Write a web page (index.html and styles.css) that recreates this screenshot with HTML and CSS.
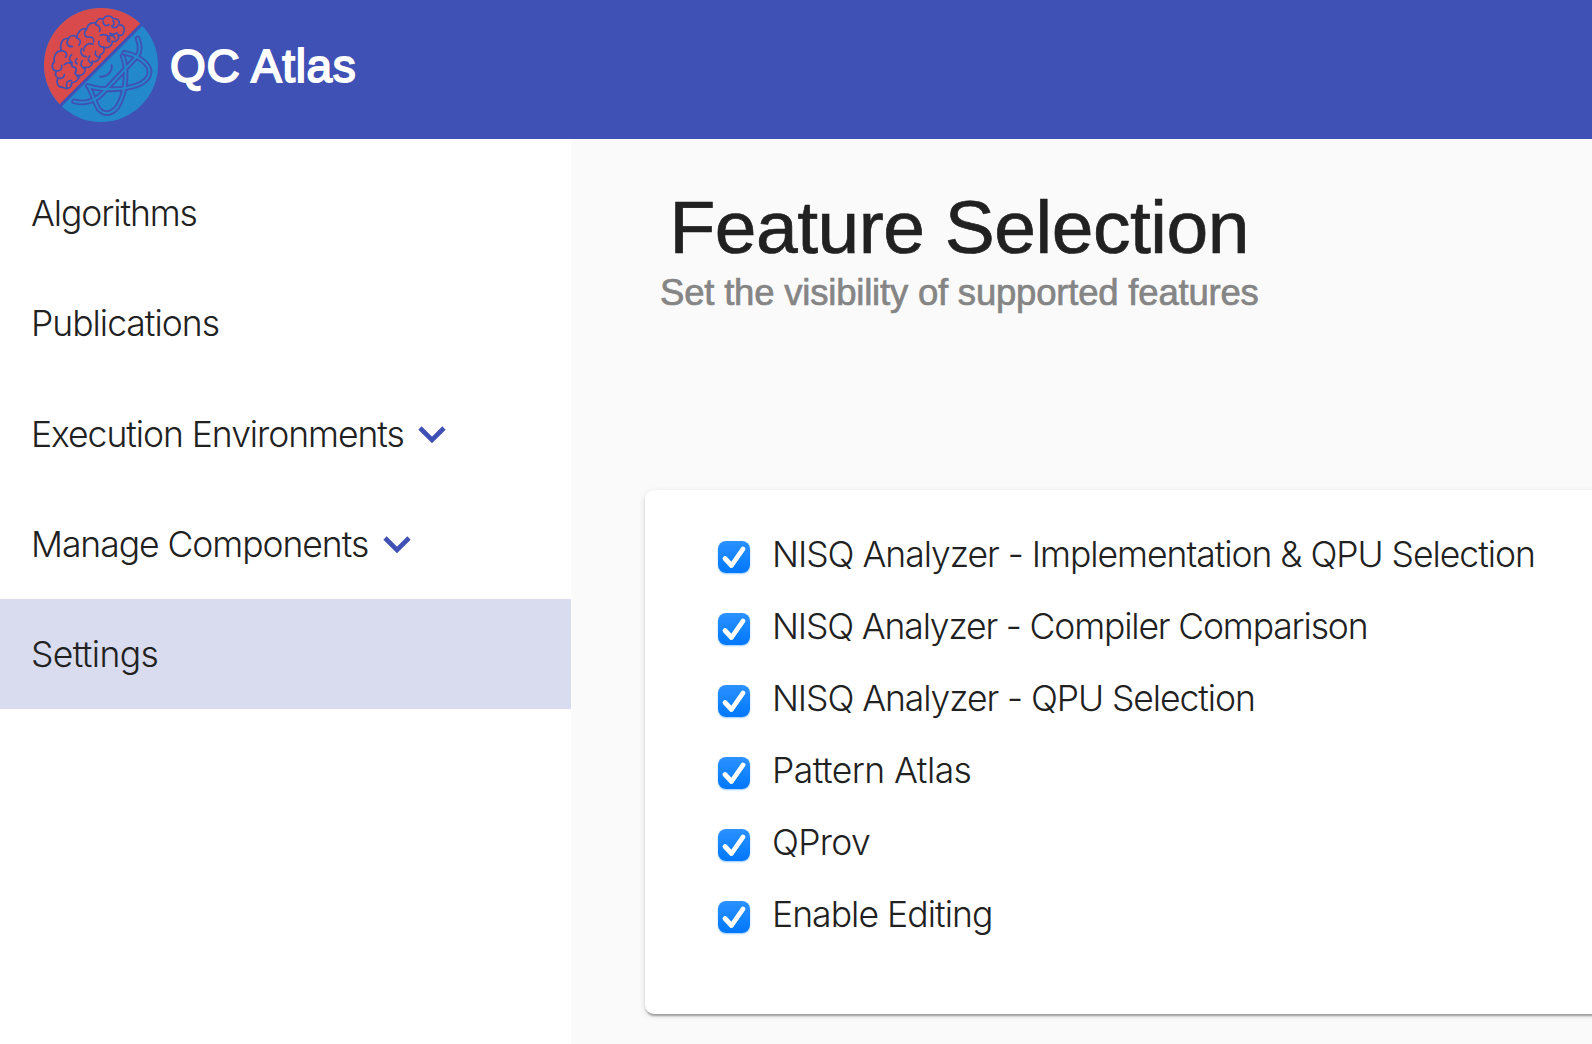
FILE: index.html
```html
<!DOCTYPE html>
<html lang="en">
<head>
<meta charset="utf-8">
<title>QC Atlas</title>
<link rel="stylesheet" href="styles.css">
</head>
<body>
<header class="toolbar">
  <svg class="logo" viewBox="42 24 342 342" aria-hidden="true">
    <circle cx="213" cy="195" r="171" fill="#2488cc"/>
    <path d="M92 316A171 171 0 0 1 334 74Z" fill="#d84a4b"/>
    <path d="M86 322L340 68" stroke="#3f51b5" stroke-width="9"/>
    <g class="lines">
      <path d="M85 234c-10-4-10-14-6-20c-14-4-16-20-6-28c-4-16 4-32 20-34c-4-20 4-40 22-36c4-10 18-12 26-4c2-20 18-30 28-24c4-16 16-22 28-18c2-10 12-18 22-12c6-12 24-14 30-2c14-2 22 8 18 18c14 0 20 14 14 22c0 10-8 12-16 8c4 14-6 24-18 20c0 14-12 22-26 18c4 10 0 20-10 22c0 14-12 24-24 20c0 14-10 20-22 18c2 16-6 26-20 24c2 14-8 22-20 22c0 16-14 22-26 14c-14 0-22-12-16-26Z"/>
      <path d="M95 152c14 2 18 10 12 20M79 214c12 0 18-8 16-18M115 118c-8 12-2 22 12 22M141 114c12 4 12 14 6 22M169 88c-10 10-6 20 4 24c14-4 20 4 18 14M197 74c10 2 16 10 12 20M219 64c0 12 10 16 18 10M263 78c-6 8-14 6-18 0M249 62c6 6 4 14-4 16M221 142c-12 0-18-10-14-18M211 172c-12 0-18-8-14-18M187 190c-12-2-16-14-8-22M165 206c-14-4-14-16-8-24M149 232c-10-2-16-12-12-20M110 262c-4-12 4-22 14-20M85 234c10 4 18-2 18-10M103 194c10-10 24-6 24 6c12 0 16 12 8 20M125 164c-10 8-8 20 2 24M155 146c-6 12 0 24 14 24M189 132c-14-4-28 4-28 20M239 126c-8-2-10-12-2-18c8-4 16 0 18 8M261 98c-8 8-14 6-22 2M211 106c14-6 28 2 28 14M141 192c-6-4-6-12 0-16"/>
      <path d="M210 230C230 232 248 215 245 196" stroke-width="6"/>
      <path class="orbit-outer" d="M132 304C165 314 198 302 221 276L321 169C333 154 331 136 323 115M283 158C344 171 365 205 357 226C345 253 303 266 244 268C222 268 199 266 173 258M278 168C293 205 288 269 270 306C253 344 225 347 207 328C193 308 191 287 176 260"/>
      <path class="orbit-inner" d="M132 304C165 314 198 302 221 276L321 169C333 154 331 136 323 115M283 158C344 171 365 205 357 226C345 253 303 266 244 268C222 268 199 266 173 258M278 168C293 205 288 269 270 306C253 344 225 347 207 328C193 308 191 287 176 260"/>
    </g>
  </svg>
  <span class="brand">QC Atlas</span>
</header>
<div class="layout">
  <nav class="sidebar">
    <a class="nav-item nav-algorithms">Algorithms</a>
    <a class="nav-item nav-publications">Publications</a>
    <a class="nav-item nav-execution">Execution Environments<svg class="chevron" viewBox="0 0 28 17"><path d="M2 2L14 14L26 2"/></svg></a>
    <a class="nav-item nav-components">Manage Components<svg class="chevron" viewBox="0 0 28 17"><path d="M2 2L14 14L26 2"/></svg></a>
    <a class="nav-item nav-settings active">Settings</a>
  </nav>
  <main class="content">
    <h1 class="title">Feature Selection</h1>
    <p class="subtitle">Set the visibility of supported features</p>
    <section class="card">
      <label class="option"><span class="check"><svg viewBox="0 0 32 32"><path d="M7 17.5L13.5 24.5L25 8"/></svg></span><span class="label label-implementation">NISQ Analyzer - Implementation &amp; QPU Selection</span></label>
      <label class="option"><span class="check"><svg viewBox="0 0 32 32"><path d="M7 17.5L13.5 24.5L25 8"/></svg></span><span class="label label-compiler">NISQ Analyzer - Compiler Comparison</span></label>
      <label class="option"><span class="check"><svg viewBox="0 0 32 32"><path d="M7 17.5L13.5 24.5L25 8"/></svg></span><span class="label label-qpu">NISQ Analyzer - QPU Selection</span></label>
      <label class="option"><span class="check"><svg viewBox="0 0 32 32"><path d="M7 17.5L13.5 24.5L25 8"/></svg></span><span class="label label-pattern">Pattern Atlas</span></label>
      <label class="option"><span class="check"><svg viewBox="0 0 32 32"><path d="M7 17.5L13.5 24.5L25 8"/></svg></span><span class="label label-qprov">QProv</span></label>
      <label class="option"><span class="check"><svg viewBox="0 0 32 32"><path d="M7 17.5L13.5 24.5L25 8"/></svg></span><span class="label label-editing">Enable Editing</span></label>
    </section>
  </main>
</div>
</body>
</html>
```
FILE: styles.css
```css
* { box-sizing: border-box; }
body {
  margin: 0;
  height: 1044px;
  display: flex;
  flex-direction: column;
  overflow: hidden;
  background: #fafafa;
  color: #212121;
  font-family: "Inter", "Liberation Sans", sans-serif;
  font-weight: 300;
  font-size: 35.5px;
  letter-spacing: -1.1px;
}
.toolbar {
  height: 139px;
  flex: none;
  padding: 8px 44px;
  display: flex;
  align-items: flex-start;
  gap: 12px;
  background: #3f51b5;
  color: #fff;
}
.logo { width: 114px; height: 114px; }
.lines { fill: none; stroke: #3f51b5; stroke-width: 5; stroke-linecap: round; }
.orbit-outer { stroke-width: 17; }
.orbit-inner { stroke: #2488cc; stroke-width: 6; }
.brand {
  font: 400 46px/117px "Liberation Sans", Arial, sans-serif;
  letter-spacing: .6px;
  -webkit-text-stroke: 1.8px #fff;
}
.layout { flex: 1; display: flex; min-height: 0; }
.sidebar { width: 571px; flex: none; padding-top: 20px; background: #fff; }
.nav-item {
  height: 110px;
  padding-left: 31px;
  display: flex;
  align-items: center;
  gap: 15px;
  white-space: nowrap;
}
.nav-algorithms, .nav-publications { padding-bottom: 1px; }
.nav-publications { letter-spacing: -1px; }
.nav-execution, .nav-components { letter-spacing: -1.05px; }
.nav-execution { gap: 14px; }
.nav-settings { letter-spacing: -.65px; }
.active { background: #d9dbef; }
.chevron { width: 28px; height: 17px; fill: none; stroke: #3f51b5; stroke-width: 4.6; }
.content { flex: 1; min-width: 0; padding-left: 74px; display: flex; flex-direction: column; }
.title {
  margin: 46px 0 0 24.5px;
  font: 400 75px/84px "Liberation Sans", Arial, sans-serif;
  letter-spacing: -.5px;
  -webkit-text-stroke: .7px #212121;
  white-space: nowrap;
}
.subtitle {
  margin: 2px 0 0 15px;
  color: #858585;
  font: 400 36.5px/44px "Liberation Sans", Arial, sans-serif;
  letter-spacing: -.2px;
  -webkit-text-stroke: .7px #858585;
  white-space: nowrap;
}
.card {
  width: 1000px;
  height: 524px;
  margin-top: 175px;
  padding: 31px 0 0 73px;
  background: #fff;
  border-radius: 9px;
  box-shadow: 0 4px 2px -2px rgba(0,0,0,.2), 0 2px 2px rgba(0,0,0,.14), 0 2px 6px rgba(0,0,0,.12);
}
.option { height: 72px; display: flex; align-items: center; gap: 22px; white-space: nowrap; }
.label { padding-bottom: 5px; }
.label-implementation { letter-spacing: -1.03px; }
.label-compiler { letter-spacing: -1.16px; }
.label-qpu { letter-spacing: -1.08px; }
.label-pattern { letter-spacing: -.55px; }
.label-qprov { letter-spacing: -.7px; }
.label-editing { letter-spacing: -.95px; }
.check {
  width: 32px;
  height: 32px;
  border-radius: 8px;
  background: linear-gradient(#2b92ff, #0077ff);
  box-shadow: 0 1px 2px rgba(0,122,255,.4);
}
.check svg { display: block; fill: none; stroke: #fff; stroke-width: 4.8; stroke-linecap: round; stroke-linejoin: round; }
```
